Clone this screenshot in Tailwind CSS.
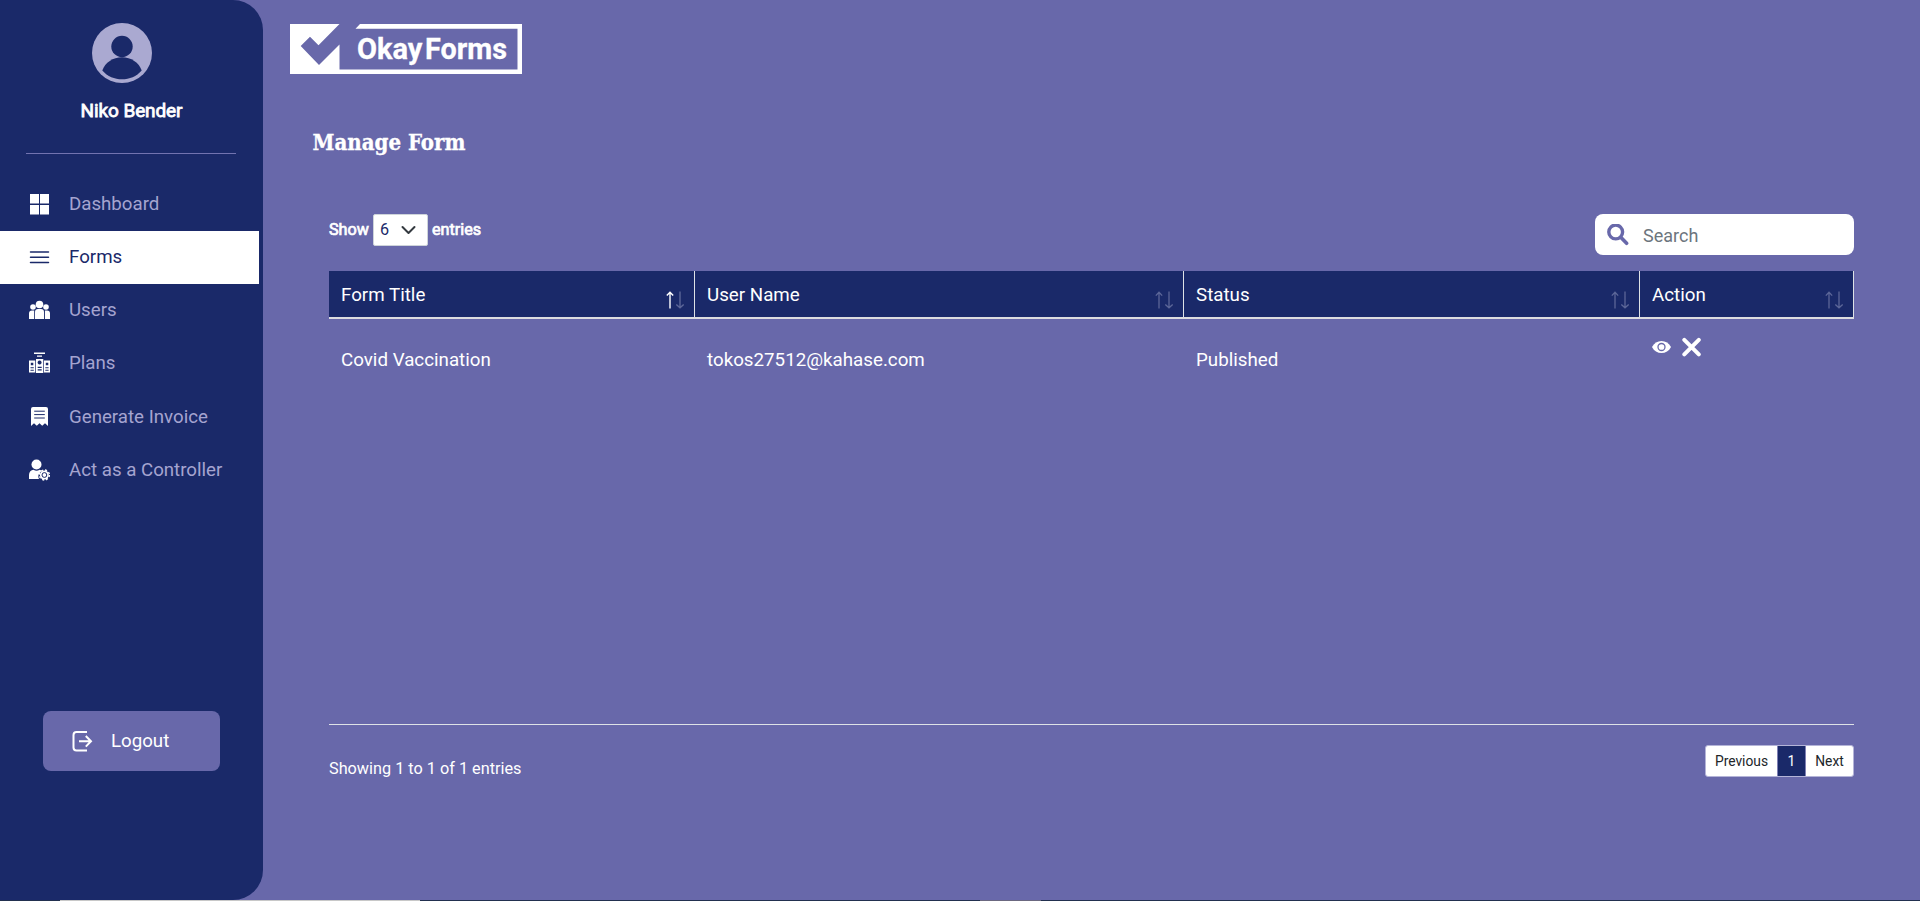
<!DOCTYPE html>
<html lang="en">
<head>
<meta charset="utf-8">
<title>OkayForms - Manage Form</title>
<script src="https://cdn.jsdelivr.net/npm/@tailwindcss/browser@4"></script>
</head>
<body class="flex h-[901px] flex-col overflow-hidden bg-[#6868aa] font-[Roboto,sans-serif] text-white">
<svg class="hidden">
  <symbol id="sort" viewBox="0 0 20 20">
    <path d="M5 18.500V3M1.800 5.600 5 2.200l3.200 3.400M15 1.500V17M11.300 14.400 15 17.800l3.700-3.400" fill="none" stroke="#5c6698" stroke-width="1.300"/>
  </symbol>
</svg>
<div class="flex h-[900px]">
  <aside class="flex w-[263px] shrink-0 flex-col rounded-r-[30px] bg-[#1a2969]">
    <div class="mt-[23px] ml-[92px] h-[60px] w-[60px]">
      <svg viewBox="0 0 60 60" class="size-full"><circle cx="30" cy="30" r="30" fill="#aaa9d1"/><circle cx="30" cy="23.500" r="10.700" fill="#1a2969"/><path d="M10.300 47.500C13 39.500 21 34.200 30 34.200s17 5.300 19.700 13.300C44.500 53.500 37.500 56.300 30 56.300S15.500 53.500 10.300 47.500Z" fill="#1a2969"/></svg>
    </div>
    <div class="mt-[14px] text-center text-[19px] leading-7 tracking-[-0.1px] [-webkit-text-stroke:0.8px_white]">Niko Bender</div>
    <hr class="mt-[28px] ml-[26px] w-[210px] border-[#7273b0]">
    <nav class="mt-6 w-[259px] text-[18.700px] text-[#a5a4d0]">
      <a class="flex h-[53.300px] items-center pb-px pl-[28px]"><svg class="mr-[19px] size-[22px]" viewBox="0 0 22 22" fill="#fff"><path d="M2 1h9v9.500H2zM12 1h9v9.500h-9zM2 12h9v9.500H2zM12 12h9v9.500h-9z"/></svg>Dashboard</a>
      <a class="flex h-[53px] items-center bg-white pb-[2px] pl-[28px] text-[#1a2969]"><svg class="mr-[19px] size-[22px]" viewBox="0 0 22 22" stroke="#1a2969" stroke-width="1.500" stroke-linecap="round"><path d="M2.500 6h18M2.500 11.300h18M2.500 16.600h18"/></svg>Forms</a>
      <a class="flex h-[53.300px] items-center pb-[2px] pl-[28px]"><svg class="mr-[19px] size-[22px]" viewBox="0 0 22 22" fill="#fff"><circle cx="11.500" cy="5.500" r="3.800"/><circle cx="5" cy="8" r="2.800"/><circle cx="18" cy="8" r="2.800"/><path d="M7 20v-7a3 3 0 0 1 3-3h3a3 3 0 0 1 3 3v7zM1 20v-5.500a3 3 0 0 1 3-3h2.200V20zM16.900 20v-8.500H19a3 3 0 0 1 3 3V20z"/></svg>Users</a>
      <a class="flex h-[53.300px] items-center pb-[2px] pl-[28px]"><svg class="mr-[19px] size-[22px]" viewBox="0 0 22 22" fill="#fff"><path d="M6 .6h11v1.300H6zM9 3.500h5v1.300H9z"/><path fill-rule="evenodd" d="M1 8.500h6.300v12H1zM2.800 10.700v2.500h2.500v-2.500zM2.500 15.200v1h3.300v-1zM2.500 17.700v1h3.300v-1zM8 7h7.300v14H8zM11.600 8.600a2 2 0 1 0 .01 0zM9.700 14.800v1.100h4v-1.100zM9.700 17.300v1.100h4v-1.100zM16 8.500h6v12h-6zM17.800 10.700v2.500h2.500v-2.500zM17.300 15.200v1h3.300v-1zM17.300 17.700v1h3.300v-1z"/></svg>Plans</a>
      <a class="flex h-[53.300px] items-center pb-px pl-[28px]"><svg class="mr-[19px] size-[22px]" viewBox="0 0 22 22"><path fill="#fff" d="M3 3a2 2 0 0 1 2-2h13a2 2 0 0 1 2 2v17l-3-2.800-2.800 2.500-2.700-2.500-2.700 2.500L6 17.200 3 20z"/><path d="M6.200 5.200h10.600M6.200 8.600h10.600M6.200 12h10.600" stroke="#1a2969" stroke-width="1"/></svg>Generate Invoice</a>
      <a class="flex h-[53.300px] items-center pb-[2px] pl-[28px]"><svg class="mr-[19px] size-[22px]" viewBox="0 0 22 22"><circle cx="8.500" cy="5.500" r="5" fill="#fff"/><path fill="#fff" d="M1 20v-4c0-3 2-5 4.500-5.200 2 1.200 4.200 1.200 6 0 1.200.3 2 .8 2.500 1.500-3 1-4.500 4.500-3 7.700z"/><circle cx="16.400" cy="16" r="4.500" fill="#fff"/><circle cx="16.400" cy="16" r="5" fill="none" stroke="#fff" stroke-width="1.400" stroke-dasharray="2.100 1.830"/><circle cx="16.400" cy="16" r="2.400" fill="none" stroke="#1a2969" stroke-width="1"/></svg>Act as a Controller</a>
    </nav>
    <a class="mt-[214px] ml-[43px] flex h-[60px] w-[177px] items-center rounded-lg bg-[#6868aa] pl-[28px] text-[18.700px]"><svg class="mr-[18px] size-[22px]" viewBox="0 0 22 22" fill="none" stroke="#fff" stroke-width="2"><path d="M16 2H5.500Q2.500 2 2.500 5v12.500q0 3 3 3H16M8 11.300h12M14.800 6l5.200 5.300-5.200 5.300"/></svg>Logout</a>
  </aside>
  <main class="flex flex-1 flex-col">
    <svg class="mt-6 ml-[27px] h-[50px] w-[232px]" viewBox="0 0 232 50"><path fill="#fff" d="M0 0H49.500L28.500 21.300 20 12.700 10.700 22 29 41 49.500 20.500V45.500H227.500V4.800H65.500L70 0H232V50H0Z"/><text x="67" y="34.800" font-size="28.800" font-weight="700" fill="#fff" stroke="#fff" stroke-width=".3" textLength="65.500" lengthAdjust="spacingAndGlyphs">Okay</text><text x="135" y="34.800" font-size="28.800" font-weight="700" fill="#fff" stroke="#fff" stroke-width=".3" textLength="82" lengthAdjust="spacingAndGlyphs">Forms</text></svg>
    <h1 class="mt-[49px] ml-[49px] h-9"><svg class="h-9 w-[240px] overflow-visible" viewBox="0 0 240 36"><text x="0.500" y="26.800" font-family="DejaVu Serif" font-size="22.800" font-weight="700" fill="#fff" stroke="#fff" stroke-width=".35" textLength="153" lengthAdjust="spacingAndGlyphs">Manage Form</text></svg></h1>
    <section class="mt-[55px] ml-[66px] w-[1525px]">
      <div class="flex h-[57px] items-start justify-between">
        <div class="flex h-8 items-center text-[16.200px]"><span class="w-11 [-webkit-text-stroke:0.7px_white]">Show</span>
          <div class="flex h-8 w-[55px] items-center rounded-[2px] border border-[#ced4da] bg-white pl-[6px] text-[#1a2969]">6<svg class="ml-[11px] size-4" viewBox="0 0 16 16" fill="none" stroke="#343a40" stroke-width="2" stroke-linecap="round" stroke-linejoin="round"><path d="m2.500 5 6 6 6-6"/></svg></div>
          <span class="ml-1 [-webkit-text-stroke:0.7px_white]">entries</span></div>
        <div class="flex h-[41px] w-[259px] items-center rounded-lg bg-white pl-3 text-[18px] text-[#6c757d]"><svg class="mr-[14px] size-[22px]" viewBox="0 0 22 22" fill="none" stroke="#6868aa"><circle cx="8.700" cy="8" r="6.900" stroke-width="3.400"/><path d="m14 13.500 5.600 5.800" stroke-width="3.600" stroke-linecap="round"/></svg><span class="pt-px">Search</span></div>
      </div>
      <div class="h-[454px] border-b border-[#dee2e6]">
        <div class="grid h-12 grid-cols-[366px_489px_456px_214px] border-b-2 border-[#dcdce0] bg-[#1a2969] text-[18.750px]">
          <div class="flex items-center justify-between border-r border-[#dee2e6] pr-[9px] pl-3"><span class="pt-[2px]">Form Title</span><svg class="mt-3 size-5" viewBox="0 0 20 20" fill="none" stroke-width="1.400"><path stroke="#fff" d="M5 18.500V3M1.800 5.600 5 2.200l3.200 3.400"/><path stroke="#5c6698" d="M15 1.500V17M11.300 14.400 15 17.800l3.700-3.400"/></svg></div>
          <div class="flex items-center justify-between border-r border-[#dee2e6] pr-[9px] pl-3"><span class="pt-[2px]">User Name</span><svg class="mt-3 size-5"><use href="#sort"/></svg></div>
          <div class="flex items-center justify-between border-r border-[#dee2e6] pr-[9px] pl-3"><span class="pt-[2px]">Status</span><svg class="mt-3 size-5"><use href="#sort"/></svg></div>
          <div class="flex items-center justify-between border-r border-[#dee2e6] pr-[9px] pl-3"><span class="pt-[2px]">Action</span><svg class="mt-3 size-5"><use href="#sort"/></svg></div>
        </div>
        <div class="grid h-20 grid-cols-[366px_489px_456px_214px] text-[18.750px]">
          <div class="pt-[27px] pl-3">Covid Vaccination</div><div class="pt-[27px] pl-3">tokos27512@kahase.com</div><div class="pt-[27px] pl-3">Published</div>
          <div class="flex gap-[11px] pt-[18px] pl-3"><svg class="h-5 w-[19px]" viewBox="0 0 19 20"><path fill="#fff" d="M0 10C2 6 5.500 4 9.500 4S17 6 19 10c-2 4-5.500 6-9.500 6S2 14 0 10Z"/><circle cx="9.500" cy="10" r="3.500" fill="none" stroke="#6868aa" stroke-width="1.300"/></svg><svg class="size-5" viewBox="0 0 20 20"><path d="m2.300 2.800 14.500 14.500M16.800 2.800 2.300 17.300" stroke="#fff" stroke-width="4" stroke-linecap="round"/></svg></div>
        </div>
      </div>
      <div class="flex items-start justify-between pt-5">
        <div class="mt-3 text-[16.250px] leading-6">Showing 1 to 1 of 1 entries</div>
        <div class="flex h-8 w-[149px] overflow-hidden rounded-[3px] border border-[#b4b4d8] bg-white text-[13.800px] text-[#212529]"><span class="flex w-[71px] items-center justify-center">Previous</span><span class="flex w-[29px] items-center justify-center border-x border-[#7f80b4] bg-[#1a2969] text-white">1</span><span class="flex flex-1 items-center justify-center">Next</span></div>
      </div>
    </section>
  </main>
</div>
<div class="flex h-px bg-[#22304f]"><div class="ml-[60px] w-[360px] bg-[#c8c8c8]"></div><div class="ml-[560px] w-[61px] bg-[#6b6880]"></div></div>
</body>
</html>
